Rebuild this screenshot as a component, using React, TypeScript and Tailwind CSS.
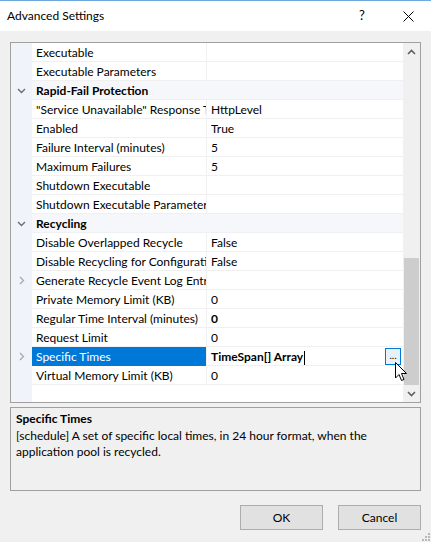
import React from "react";

type Row =
  | { kind: "cat"; label: string }
  | { kind: "prop"; label: string; value?: string; bold?: boolean; expand?: boolean; selected?: boolean };

const rows: Row[] = [
  { kind: "prop", label: "Executable" },
  { kind: "prop", label: "Executable Parameters" },
  { kind: "cat", label: "Rapid-Fail Protection" },
  { kind: "prop", label: "\"Service Unavailable\" Response Type", value: "HttpLevel" },
  { kind: "prop", label: "Enabled", value: "True" },
  { kind: "prop", label: "Failure Interval (minutes)", value: "5" },
  { kind: "prop", label: "Maximum Failures", value: "5" },
  { kind: "prop", label: "Shutdown Executable" },
  { kind: "prop", label: "Shutdown Executable Parameters" },
  { kind: "cat", label: "Recycling" },
  { kind: "prop", label: "Disable Overlapped Recycle", value: "False" },
  { kind: "prop", label: "Disable Recycling for Configuration Changes", value: "False" },
  { kind: "prop", label: "Generate Recycle Event Log Entry", expand: true },
  { kind: "prop", label: "Private Memory Limit (KB)", value: "0" },
  { kind: "prop", label: "Regular Time Interval (minutes)", value: "0", bold: true },
  { kind: "prop", label: "Request Limit", value: "0" },
  { kind: "prop", label: "Specific Times", value: "TimeSpan[] Array", bold: true, expand: true, selected: true },
  { kind: "prop", label: "Virtual Memory Limit (KB)", value: "0" },
];

const ChevronDown = () => (
  <svg width="9" height="6" viewBox="0 0 9 6">
    <path d="M1 1 L4.5 4.5 L8 1" fill="none" stroke="#6d6d6d" strokeWidth="1.4" />
  </svg>
);

const ChevronRight = () => (
  <svg width="6" height="9" viewBox="0 0 6 9">
    <path d="M1 1 L4.5 4.5 L1 8" fill="none" stroke="#a8a8a8" strokeWidth="1.3" />
  </svg>
);

const ArrowUp = () => (
  <svg width="9" height="6" viewBox="0 0 9 6">
    <path d="M1 5 L4.5 1.5 L8 5" fill="none" stroke="#606060" strokeWidth="1.6" />
  </svg>
);

const ArrowDown = () => (
  <svg width="9" height="6" viewBox="0 0 9 6">
    <path d="M1 1 L4.5 4.5 L8 1" fill="none" stroke="#606060" strokeWidth="1.6" />
  </svg>
);

const Cursor = () => (
  <svg width="13" height="20" viewBox="0 0 13 20" className="absolute left-[395px] top-[362px]">
    <path
      d="M0.5 0.5 L0.5 16 L4 12.5 L6.5 18.5 L9 17.5 L6.5 11.5 L11.5 11.5 Z"
      fill="#fff"
      stroke="#000"
      strokeWidth="1"
      strokeLinejoin="miter"
    />
  </svg>
);

function GridRow({ row }: { row: Row }) {
  if (row.kind === "cat") {
    return (
      <div className="flex h-[19px] bg-[#f5f7fa]">
        <div className="w-[21px] flex items-center justify-center bg-[#f0f3f9]">
          <ChevronDown />
        </div>
        <div className="flex-1 pl-[4px] pt-px font-bold leading-[18px] border-b border-[#eef0f3]">{row.label}</div>
      </div>
    );
  }
  return (
    <div className="flex h-[19px]">
      <div className="w-[21px] flex items-center justify-center bg-[#f0f3f9]">
        {row.expand && <ChevronRight />}
      </div>
      <div
        className={`w-[174px] pl-[4px] pt-px leading-[18px] whitespace-nowrap overflow-hidden border-b ${
          row.selected ? "bg-[#0078d7] text-white border-[#0078d7]" : "border-[#f0f0f0]"
        }`}
      >
        {row.label}
      </div>
      <div className="w-px bg-[#f0f0f0]" />
      <div
        className={`relative flex-1 pl-[4px] pt-px leading-[18px] whitespace-nowrap overflow-hidden border-b border-[#f0f0f0] ${
          row.bold ? "font-bold" : ""
        }`}
      >
        {row.value}
        {row.selected && (
          <>
            <span className="inline-block w-px h-[14px] bg-black align-middle ml-[1px]" />
            <span className="absolute right-[2px] top-[1px] w-[16px] h-[17px] border border-[#0078d7] bg-[#e5f1fb] text-[10px] leading-[12px] text-center text-black font-normal">
              ...
            </span>
          </>
        )}
      </div>
    </div>
  );
}

export default function App() {
  return (
    <div
      className="relative w-[431px] h-[542px] bg-[#f0f0f0] flex flex-col text-[12px] text-black overflow-hidden"
      style={{ fontFamily: "Lato, 'Noto Sans', sans-serif" }}
    >
      {/* title bar */}
      <div className="h-[31px] bg-white border-t border-[#6fa8dc] flex items-center pl-[7px]">
        <span className="flex-1 text-[12px]">Advanced Settings</span>
        <span className="w-[46px] text-center text-[13px]">?</span>
        <span className="w-[46px] flex justify-center">
          <svg width="11" height="11" viewBox="0 0 11 11">
            <path d="M0.5 0.5 L10.5 10.5 M10.5 0.5 L0.5 10.5" stroke="#000" strokeWidth="1" />
          </svg>
        </span>
      </div>

      <div className="flex flex-col px-[10px] pt-[11px]">
        {/* property grid */}
        <div className="h-[361px] border border-[#a0a0a0] bg-white flex">
          <div className="flex-1 flex flex-col">
            {rows.map((r, i) => (
              <GridRow key={i} row={r} />
            ))}
            <div className="flex flex-1">
              <div className="w-[21px] bg-[#f0f3f9]" />
              <div className="flex-1" />
            </div>
          </div>
          <div className="w-[17px] bg-[#f0f0f0] flex flex-col items-center">
            <div className="h-[17px] flex items-center justify-center">
              <ArrowUp />
            </div>
            <div className="flex-1 w-full flex flex-col justify-end">
              <div className="h-[127px] mx-px bg-[#cdcdcd]" />
            </div>
            <div className="h-[17px] flex items-center justify-center">
              <ArrowDown />
            </div>
          </div>
        </div>

        {/* description */}
        <div className="mt-[4px] h-[84px] border border-[#a0a0a0] px-[5px] pt-[2px] leading-[17px]">
          <div className="font-bold">Specific Times</div>
          <div className="leading-[16px] pt-[1px]">
            [schedule] A set of specific local times, in 24 hour format, when the application pool is recycled.
          </div>
        </div>

        {/* buttons */}
        <div className="mt-[14px] flex justify-end gap-[15px]">
          <button className="w-[83px] h-[25px] bg-[#e1e1e1] border border-[#adadad] text-[12px]">OK</button>
          <button className="w-[83px] h-[25px] bg-[#e1e1e1] border border-[#adadad] text-[12px]">Cancel</button>
        </div>
      </div>

      {/* resize grip */}
      <svg width="8" height="8" viewBox="0 0 8 8" className="absolute right-[1px] bottom-[1px]">
        <rect x="6" y="0" width="2" height="2" fill="#b8b8b8" />
        <rect x="3" y="3" width="2" height="2" fill="#b8b8b8" />
        <rect x="6" y="3" width="2" height="2" fill="#b8b8b8" />
        <rect x="0" y="6" width="2" height="2" fill="#b8b8b8" />
        <rect x="3" y="6" width="2" height="2" fill="#b8b8b8" />
        <rect x="6" y="6" width="2" height="2" fill="#b8b8b8" />
      </svg>

      <Cursor />
    </div>
  );
}
